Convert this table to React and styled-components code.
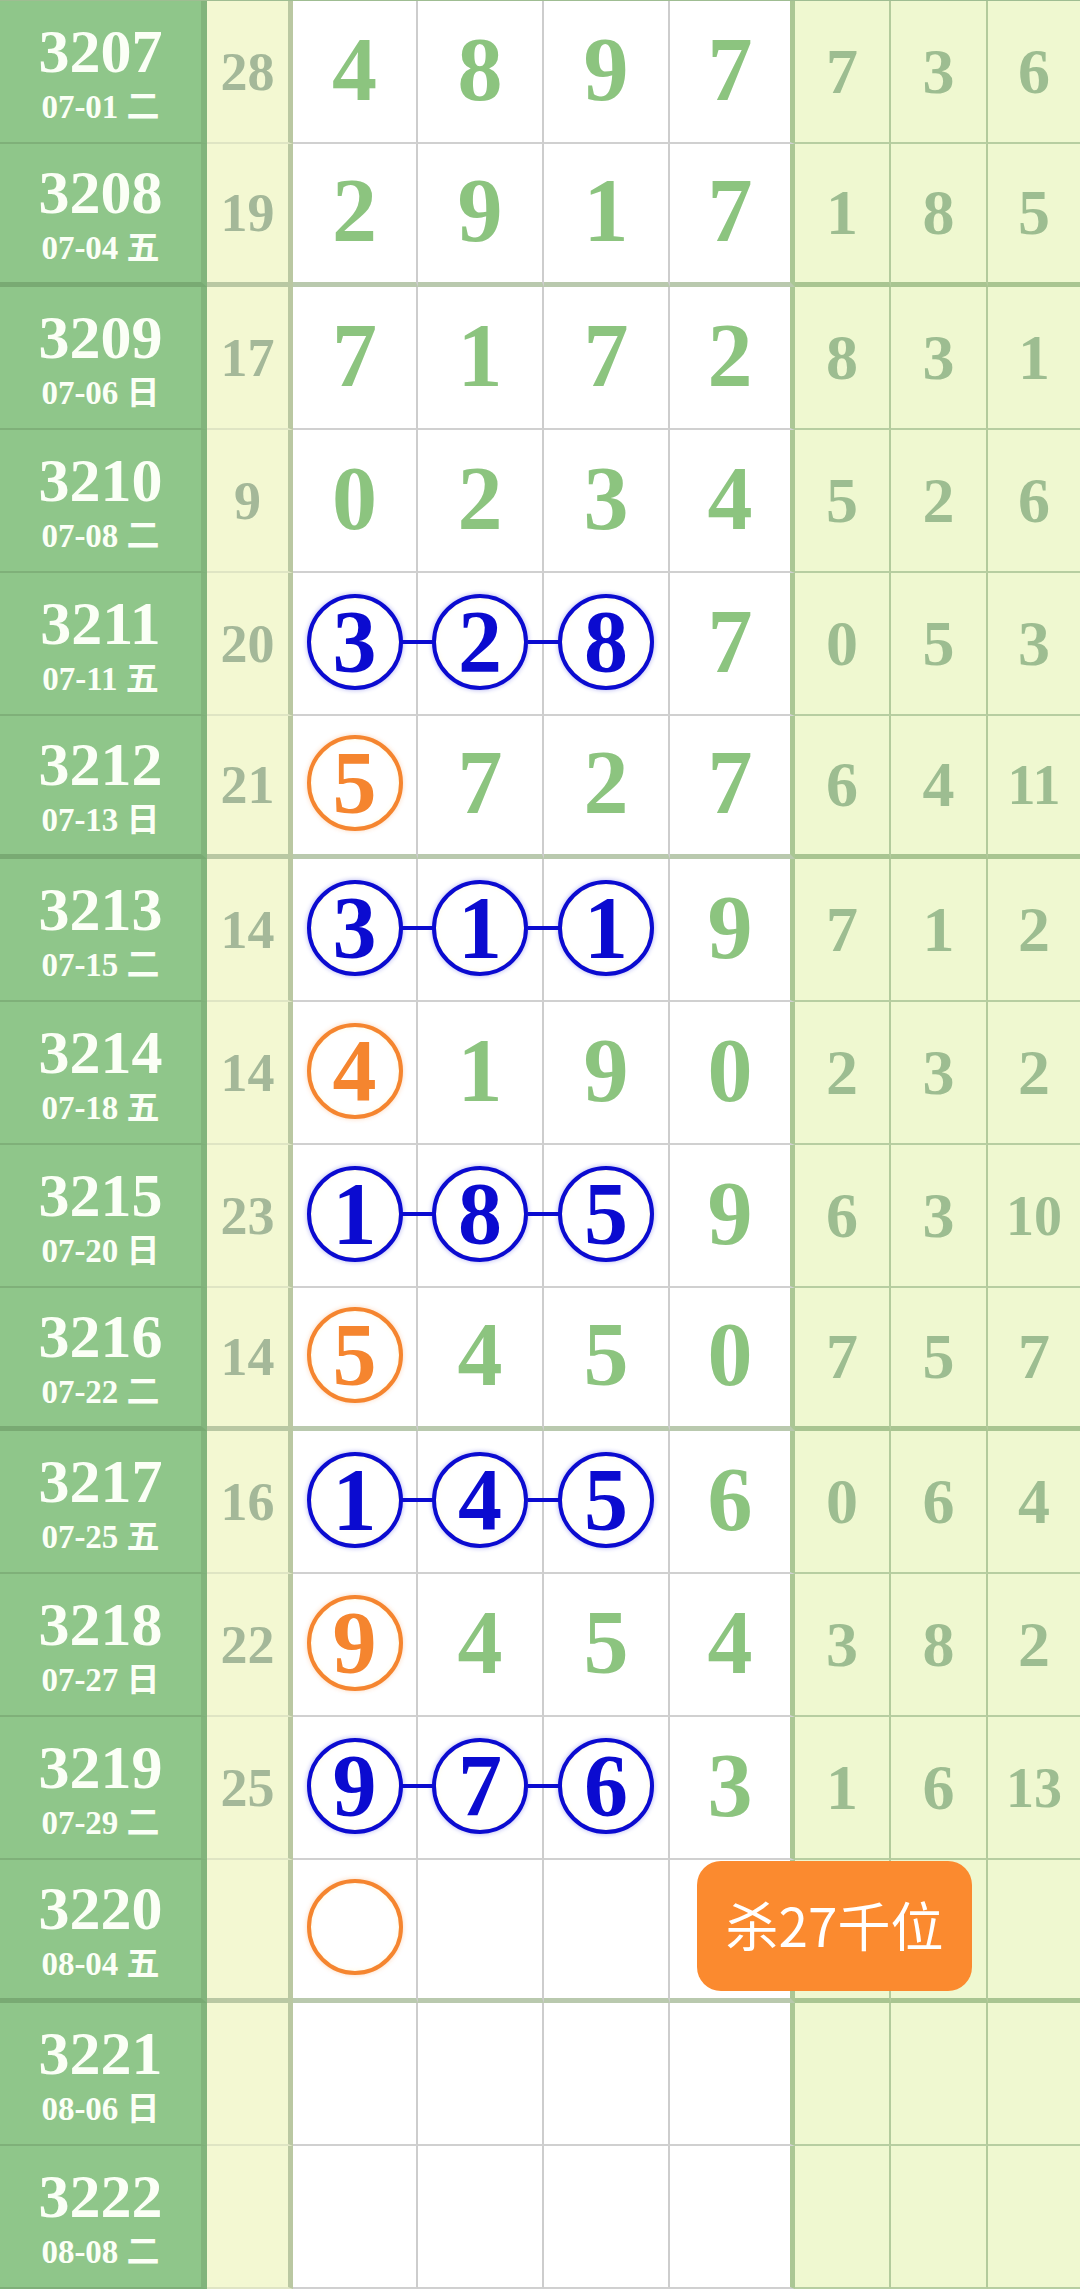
import React from 'react'
import styled, { createGlobalStyle, css } from 'styled-components'

const GlobalStyle = createGlobalStyle`
  body {
    margin: 0;
    background: #ffffff;
    font-family: "Liberation Serif", "Noto Sans CJK SC", serif;
  }
`

// period, date, sum, 4 main digits, 3 trailing numbers
// main digit: number | {v, c: 'blue'|'orange', link}
const rows = [
    ['3207', '07-01 二', 28, [4, 8, 9, 7], [7, 3, 6]],
    ['3208', '07-04 五', 19, [2, 9, 1, 7], [1, 8, 5]],
    ['3209', '07-06 日', 17, [7, 1, 7, 2], [8, 3, 1]],
    ['3210', '07-08 二', 9, [0, 2, 3, 4], [5, 2, 6]],
    ['3211', '07-11 五', 20, [{ v: 3, c: 'blue' }, { v: 2, c: 'blue', link: true }, { v: 8, c: 'blue', link: true }, 7], [0, 5, 3]],
    ['3212', '07-13 日', 21, [{ v: 5, c: 'orange' }, 7, 2, 7], [6, 4, 11]],
    ['3213', '07-15 二', 14, [{ v: 3, c: 'blue' }, { v: 1, c: 'blue', link: true }, { v: 1, c: 'blue', link: true }, 9], [7, 1, 2]],
    ['3214', '07-18 五', 14, [{ v: 4, c: 'orange' }, 1, 9, 0], [2, 3, 2]],
    ['3215', '07-20 日', 23, [{ v: 1, c: 'blue' }, { v: 8, c: 'blue', link: true }, { v: 5, c: 'blue', link: true }, 9], [6, 3, 10]],
    ['3216', '07-22 二', 14, [{ v: 5, c: 'orange' }, 4, 5, 0], [7, 5, 7]],
    ['3217', '07-25 五', 16, [{ v: 1, c: 'blue' }, { v: 4, c: 'blue', link: true }, { v: 5, c: 'blue', link: true }, 6], [0, 6, 4]],
    ['3218', '07-27 日', 22, [{ v: 9, c: 'orange' }, 4, 5, 4], [3, 8, 2]],
    ['3219', '07-29 二', 25, [{ v: 9, c: 'blue' }, { v: 7, c: 'blue', link: true }, { v: 6, c: 'blue', link: true }, 3], [1, 6, 13]],
    ['3220', '08-04 五', '', [{ v: '', c: 'orange' }, '', '', ''], ['', '', ''], '杀27千位'],
    ['3221', '08-06 日', '', ['', '', '', ''], ['', '', '']],
    ['3222', '08-08 二', '', ['', '', '', ''], ['', '', '']],
]

const thickRows = [1, 5, 9, 13]

const circleColors = {
    blue: '#0b0bd0',
    orange: '#f5852f',
}

function App() {
    return (
        <>
            <GlobalStyle />
            <Table>
                {rows.map((row, i) => {
                    const [period, date, sum, digits, rest, badge] = row
                    const thick = thickRows.includes(i)
                    return (
                        <Row key={period}>
                            <PeriodCell $thick={thick}>
                                <PeriodNum>{period}</PeriodNum>
                                <DateText>{date}</DateText>
                            </PeriodCell>
                            <SumCell $thick={thick}>{sum}</SumCell>
                            {digits.map((d, j) => (
                                <DigitCell key={j} $thick={thick} $last={j === 3}>
                                    {typeof d === 'object' ? (
                                        <Circle $color={circleColors[d.c]} $link={d.link}>{d.v}</Circle>
                                    ) : d}
                                </DigitCell>
                            ))}
                            {rest.map((r, j) => (
                                <RestCell key={j} $thick={thick} $last={j === 2} $small={String(r).length > 1}>
                                    {r}
                                </RestCell>
                            ))}
                            {badge && <Badge>{badge}</Badge>}
                        </Row>
                    )
                })}
            </Table>
        </>
    )
}

const Table = styled.div`
    width: 1080px;
    border-top: 1px solid #9fbd92;
`

const Row = styled.div`
    position: relative;
    display: grid;
    grid-template-columns: 207px 86px 125px 126px 126px 125px 96px 97px 92px;
    height: 143px;
`

const cellBase = css`
    box-sizing: border-box;
    display: flex;
    align-items: center;
    justify-content: center;
    font-weight: bold;
    line-height: 1;
`

const PeriodCell = styled.div`
    ${cellBase};
    flex-direction: column;
    gap: 9px;
    background: #8fc68a;
    color: #fbfff6;
    border-right: 6px solid #82b47c;
    border-bottom: ${p => p.$thick ? '5px solid #79aa73' : '2px solid #7fb079'};
`

const PeriodNum = styled.div`
    font-size: 62px;
    line-height: 1;
`

const DateText = styled.div`
    font-size: 33px;
    line-height: 1;
    font-family: "Liberation Serif", "Noto Sans CJK SC", serif;
`

const SumCell = styled.div`
    ${cellBase};
    background: #f3f8d2;
    color: #a4b899;
    font-size: 54px;
    border-right: 5px solid #bac8a2;
    border-bottom: ${p => p.$thick ? '5px solid #b9c8a3' : '2px solid #dfe5c4'};
`

const DigitCell = styled.div`
    ${cellBase};
    padding-bottom: 4px;
    background: #ffffff;
    color: #8cc47f;
    font-size: 90px;
    border-right: ${p => p.$last ? '5px solid #abc795' : '2px solid #cdcdcd'};
    border-bottom: ${p => p.$thick ? '5px solid #b9c9ae' : '2px solid #d0d0d0'};
`

const Circle = styled.div`
    position: relative;
    box-sizing: border-box;
    width: 96px;
    height: 96px;
    border-radius: 50%;
    border: 4px solid ${p => p.$color};
    color: ${p => p.$color};
    background: #ffffff;
    box-shadow: 0 0 5px ${p => p.$color}55, inset 0 0 4px #fff3c088;
    display: flex;
    align-items: center;
    justify-content: center;
    font-size: 88px;
    font-weight: bold;
    line-height: 1;

    ${p => p.$link && css`
        &::before {
            content: '';
            position: absolute;
            right: 100%;
            top: 50%;
            margin-top: -2px;
            width: 34px;
            height: 4px;
            background: ${p.$color};
        }
    `}
`

const RestCell = styled.div`
    ${cellBase};
    background: #eff8d0;
    color: #9dbd91;
    font-size: ${p => p.$small ? '56px' : '64px'};
    border-right: ${p => p.$last ? 'none' : '2px solid #b3cb9c'};
    border-bottom: ${p => p.$thick ? '5px solid #a9c591' : '2px solid #b7cea1'};
`

const Badge = styled.div`
    position: absolute;
    left: 697px;
    top: 1px;
    width: 275px;
    height: 130px;
    box-sizing: border-box;
    display: flex;
    align-items: center;
    justify-content: center;
    padding-bottom: 4px;
    background: #fb8a2f;
    border-radius: 24px;
    color: #ffffff;
    font-family: "Noto Sans CJK SC", sans-serif;
    font-size: 53px;
    font-weight: normal;
`

export default App
